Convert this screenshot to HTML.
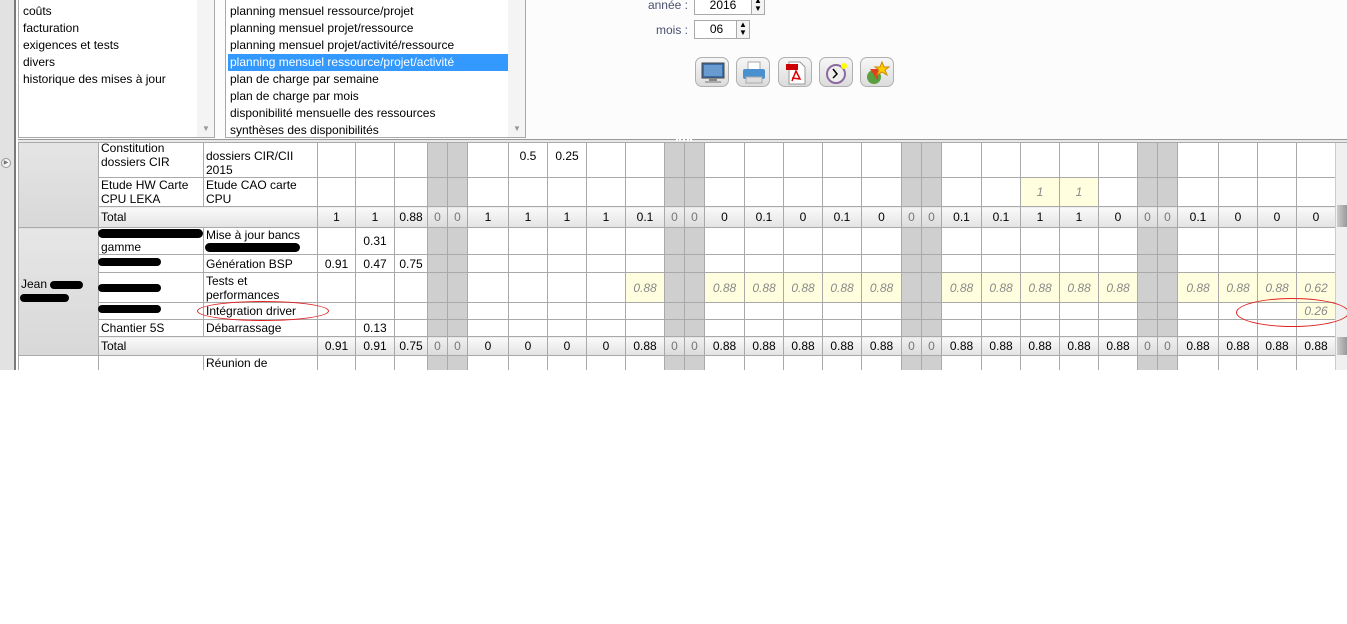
<!DOCTYPE html>
<html><head><meta charset="utf-8"><style>
*{margin:0;padding:0;box-sizing:border-box}
body{width:1347px;height:624px;background:#fff;font-family:"Liberation Sans",Tahoma,sans-serif;font-size:12px;color:#000;position:relative;overflow:hidden}
#top{position:absolute;left:0;top:0;width:1347px;height:140px;background:#fcfcfc}
#strip{position:absolute;left:0;top:0;width:16px;height:370px;background:#e2e2e2;border-right:2px solid #7a7a7a}
.lb{position:absolute;top:-2px;height:140px;background:#fff;border:1px solid #a9a9a9}
.lb>.it{position:absolute;left:4px;height:17px;line-height:17px;white-space:nowrap}
.sb{position:absolute;top:0;right:0;width:17px;height:100%;background:#f4f4f4}
.arr{position:absolute;bottom:4px;left:5px;color:#999;font-size:8px}
.lb>.hl{background:#3399ff;color:#fff;left:2px;padding-left:2px;width:280px}
.lab{position:absolute;color:#4a5070;text-align:right;width:60px}
.inp{position:absolute;border:1px solid #a9a9a9;background:#fff;text-align:center;line-height:16px}
.spin{position:absolute;border:1px solid #a9a9a9;background:#f4f4f4;width:14px;font-size:8px;line-height:8px;text-align:center}
.btn{position:absolute;top:57px;width:34px;height:30px;border:1px solid #b0b0b0;border-radius:7px;background:linear-gradient(#f6f6f6,#dcdcdc)}
.btn svg{position:absolute;left:4px;top:3px}
#split{position:absolute;left:18px;top:139px;width:1329px;height:4px;border-top:1px solid #999;border-bottom:1px solid #aaa;background:#e8e8e8}
#tw{position:absolute;left:18px;top:143px;width:1317px;height:227px;overflow:hidden}
table{border-collapse:collapse;table-layout:fixed;margin-top:-9px;width:1317px}
td{border:1px solid #a9a9a9;padding:0 2px;line-height:14px;text-align:center;vertical-align:middle;white-space:nowrap;overflow:hidden}
td.l{text-align:left;white-space:normal}
td.g{background:linear-gradient(#e6e6e6,#d8d8d8);border-right:1px solid #a9a9a9}
td.w{background:#cfcfcf}
td.y{background:#ffffe0;color:#888;font-style:italic}
tr.t td{background:linear-gradient(#fafafa,#e3e3e3)}
tr.t td.w{color:#777;background:linear-gradient(#f0f0f0,#dadada)}
#vs{position:absolute;left:1335px;top:143px;width:12px;height:227px;background:#f0f0f0;border-left:1px solid #ccc}
.blk{position:absolute;background:#000;border-radius:8px}
.ell{position:absolute;border:1px solid #e02020;border-radius:50%}
</style></head><body>
<div id="top"></div>
<div id="strip"></div>
<div style="position:absolute;left:1px;top:158px;width:10px;height:10px;border:1px solid #999;border-radius:50%;background:#f4f4f4;font-size:6px;line-height:8px;text-align:center;color:#777">▶</div>
<div class="lb" style="left:18px;width:197px">
<div class="it" style="top:4px">coûts</div><div class="it" style="top:21px">facturation</div><div class="it" style="top:38px">exigences et tests</div><div class="it" style="top:55px">divers</div><div class="it" style="top:72px">historique des mises à jour</div>
<div class="sb"><span class="arr">▼</span></div></div>
<div class="lb" style="left:225px;width:301px">
<div class="it" style="top:4px">planning mensuel ressource/projet</div><div class="it" style="top:21px">planning mensuel projet/ressource</div><div class="it" style="top:38px">planning mensuel projet/activité/ressource</div><div class="it hl" style="top:55px">planning mensuel ressource/projet/activité</div><div class="it" style="top:72px">plan de charge par semaine</div><div class="it" style="top:89px">plan de charge par mois</div><div class="it" style="top:106px">disponibilité mensuelle des ressources</div><div class="it" style="top:123px">synthèses des disponibilités</div>
<div class="sb"><span class="arr">▼</span></div></div>
<div class="lab" style="left:628px;top:-2px">année :</div>
<div class="inp" style="left:694px;top:-4px;width:58px;height:19px">2016</div>
<div class="spin" style="left:751px;top:-4px;height:19px">▲<br>▼</div>
<div class="lab" style="left:628px;top:23px">mois :</div>
<div class="inp" style="left:694px;top:20px;width:45px;height:19px">06</div>
<div class="spin" style="left:736px;top:20px;height:19px">▲<br>▼</div>
<div class="btn" style="left:695px"><svg width="26" height="24"><rect x="2" y="2" width="22" height="15" fill="#3a6ea8" stroke="#444"/><rect x="4" y="4" width="18" height="11" fill="#6a9bd0"/><rect x="9" y="17" width="8" height="3" fill="#888"/><rect x="5" y="20" width="16" height="2" fill="#aaa"/></svg></div>
<div class="btn" style="left:736px"><svg width="26" height="24"><rect x="7" y="1" width="12" height="8" fill="#fff" stroke="#aaa"/><rect x="2" y="8" width="22" height="10" rx="2" fill="#4a90d0"/><rect x="5" y="16" width="16" height="6" fill="#ddd" stroke="#aaa"/></svg></div>
<div class="btn" style="left:778px"><svg width="26" height="24"><path d="M6 1h11l5 5v17H6z" fill="#fff" stroke="#999"/><rect x="3" y="3" width="12" height="6" fill="#c00"/><path d="M9 20l4-10 4 8-8-1" fill="none" stroke="#d00" stroke-width="1.5"/></svg></div>
<div class="btn" style="left:819px"><svg width="26" height="24"><circle cx="12" cy="13" r="9" fill="#eee" stroke="#8a6aa0" stroke-width="2"/><path d="M9 8l4 5-4 4" fill="none" stroke="#000" stroke-width="1.5"/><circle cx="20" cy="5" r="3" fill="#ff0"/></svg></div>
<div class="btn" style="left:860px"><svg width="26" height="24"><circle cx="9" cy="16" r="7" fill="#5aa040"/><path d="M5 8l8 0 0 12z" fill="#e04020"/><path d="M17 1l2 5 5 0-4 3 2 5-5-3-5 3 2-5-4-3 5 0z" fill="#ffcc00" stroke="#c80"/></svg></div>
<div id="split"><div style="position:absolute;left:658px;top:-1px;width:16px;border-top:2px dotted #fff"></div></div>
<div id="tw"><table>
<colgroup><col style="width:80px"><col style="width:105px"><col style="width:114px"><col style="width:38px"><col style="width:39px"><col style="width:33px"><col style="width:20px"><col style="width:20px"><col style="width:41px"><col style="width:39px"><col style="width:39px"><col style="width:39px"><col style="width:39px"><col style="width:20px"><col style="width:20px"><col style="width:40px"><col style="width:39px"><col style="width:39px"><col style="width:39px"><col style="width:40px"><col style="width:20px"><col style="width:20px"><col style="width:40px"><col style="width:39px"><col style="width:39px"><col style="width:39px"><col style="width:39px"><col style="width:20px"><col style="width:20px"><col style="width:41px"><col style="width:39px"><col style="width:39px"><col style="width:39px"></colgroup>
<tr style="height:41px"><td class="g" rowspan="3"></td><td class="l" style="padding-bottom:3px">Constitution dossiers CIR</td><td class="l" style="padding-top:14px">dossiers CIR/CII 2015</td><td></td><td></td><td></td><td class="w"></td><td class="w"></td><td></td><td>0.5</td><td>0.25</td><td></td><td></td><td class="w"></td><td class="w"></td><td></td><td></td><td></td><td></td><td></td><td class="w"></td><td class="w"></td><td></td><td></td><td></td><td></td><td></td><td class="w"></td><td class="w"></td><td></td><td></td><td></td><td></td></tr>
<tr style="height:28px"><td class="l">Etude HW Carte CPU LEKA</td><td class="l">Etude CAO carte CPU</td><td></td><td></td><td></td><td class="w"></td><td class="w"></td><td></td><td></td><td></td><td></td><td></td><td class="w"></td><td class="w"></td><td></td><td></td><td></td><td></td><td></td><td class="w"></td><td class="w"></td><td></td><td></td><td class="y">1</td><td class="y">1</td><td></td><td class="w"></td><td class="w"></td><td></td><td></td><td></td><td></td></tr>
<tr class="t" style="height:21px"><td class="l" colspan="2">Total</td><td>1</td><td>1</td><td>0.88</td><td class="w">0</td><td class="w">0</td><td>1</td><td>1</td><td>1</td><td>1</td><td>0.1</td><td class="w">0</td><td class="w">0</td><td>0</td><td>0.1</td><td>0</td><td>0.1</td><td>0</td><td class="w">0</td><td class="w">0</td><td>0.1</td><td>0.1</td><td>1</td><td>1</td><td>0</td><td class="w">0</td><td class="w">0</td><td>0.1</td><td>0</td><td>0</td><td>0</td></tr>
<tr style="height:27px"><td class="g l" rowspan="6" style="vertical-align:top;padding-top:49px">Jean</td><td class="l" style="vertical-align:bottom">gamme</td><td class="l" style="vertical-align:top">Mise à jour bancs</td><td></td><td>0.31</td><td></td><td class="w"></td><td class="w"></td><td></td><td></td><td></td><td></td><td></td><td class="w"></td><td class="w"></td><td></td><td></td><td></td><td></td><td></td><td class="w"></td><td class="w"></td><td></td><td></td><td></td><td></td><td></td><td class="w"></td><td class="w"></td><td></td><td></td><td></td><td></td></tr>
<tr style="height:18px"><td class="l"></td><td class="l">Génération BSP</td><td>0.91</td><td>0.47</td><td>0.75</td><td class="w"></td><td class="w"></td><td></td><td></td><td></td><td></td><td></td><td class="w"></td><td class="w"></td><td></td><td></td><td></td><td></td><td></td><td class="w"></td><td class="w"></td><td></td><td></td><td></td><td></td><td></td><td class="w"></td><td class="w"></td><td></td><td></td><td></td><td></td></tr>
<tr style="height:30px"><td class="l"></td><td class="l">Tests et performances</td><td></td><td></td><td></td><td class="w"></td><td class="w"></td><td></td><td></td><td></td><td></td><td class="y">0.88</td><td class="w"></td><td class="w"></td><td class="y">0.88</td><td class="y">0.88</td><td class="y">0.88</td><td class="y">0.88</td><td class="y">0.88</td><td class="w"></td><td class="w"></td><td class="y">0.88</td><td class="y">0.88</td><td class="y">0.88</td><td class="y">0.88</td><td class="y">0.88</td><td class="w"></td><td class="w"></td><td class="y">0.88</td><td class="y">0.88</td><td class="y">0.88</td><td class="y">0.62</td></tr>
<tr style="height:17px"><td class="l"></td><td class="l">Intégration driver</td><td></td><td></td><td></td><td class="w"></td><td class="w"></td><td></td><td></td><td></td><td></td><td></td><td class="w"></td><td class="w"></td><td></td><td></td><td></td><td></td><td></td><td class="w"></td><td class="w"></td><td></td><td></td><td></td><td></td><td></td><td class="w"></td><td class="w"></td><td></td><td></td><td></td><td class="y">0.26</td></tr>
<tr style="height:17px"><td class="l">Chantier 5S</td><td class="l">Débarrassage</td><td></td><td>0.13</td><td></td><td class="w"></td><td class="w"></td><td></td><td></td><td></td><td></td><td></td><td class="w"></td><td class="w"></td><td></td><td></td><td></td><td></td><td></td><td class="w"></td><td class="w"></td><td></td><td></td><td></td><td></td><td></td><td class="w"></td><td class="w"></td><td></td><td></td><td></td><td></td></tr>
<tr class="t" style="height:19px"><td class="l" colspan="2">Total</td><td>0.91</td><td>0.91</td><td>0.75</td><td class="w">0</td><td class="w">0</td><td>0</td><td>0</td><td>0</td><td>0</td><td>0.88</td><td class="w">0</td><td class="w">0</td><td>0.88</td><td>0.88</td><td>0.88</td><td>0.88</td><td>0.88</td><td class="w">0</td><td class="w">0</td><td>0.88</td><td>0.88</td><td>0.88</td><td>0.88</td><td>0.88</td><td class="w">0</td><td class="w">0</td><td>0.88</td><td>0.88</td><td>0.88</td><td>0.88</td></tr>
<tr style="height:30px"><td></td><td class="l"></td><td class="l" style="vertical-align:top">Réunion de</td><td></td><td></td><td></td><td class="w"></td><td class="w"></td><td></td><td></td><td></td><td></td><td></td><td class="w"></td><td class="w"></td><td></td><td></td><td></td><td></td><td></td><td class="w"></td><td class="w"></td><td></td><td></td><td></td><td></td><td></td><td class="w"></td><td class="w"></td><td></td><td></td><td></td><td></td></tr>
</table></div>
<div id="vs"><div style="position:absolute;top:62px;left:1px;width:10px;height:22px;background:linear-gradient(90deg,#ccc,#999)"></div><div style="position:absolute;top:194px;left:1px;width:10px;height:18px;background:linear-gradient(90deg,#ccc,#999)"></div></div>
<div class="blk" style="left:98px;top:229px;width:105px;height:9px"></div>
<div class="blk" style="left:205px;top:243px;width:95px;height:9px"></div>
<div class="blk" style="left:98px;top:258px;width:63px;height:8px"></div>
<div class="blk" style="left:98px;top:284px;width:63px;height:8px"></div>
<div class="blk" style="left:98px;top:305px;width:63px;height:8px"></div>
<div class="blk" style="left:50px;top:281px;width:33px;height:8px"></div>
<div class="blk" style="left:20px;top:294px;width:49px;height:8px"></div>
<div class="ell" style="left:197px;top:301px;width:132px;height:20px"></div>
<div class="ell" style="left:1236px;top:298px;width:113px;height:29px"></div>
</body></html>
